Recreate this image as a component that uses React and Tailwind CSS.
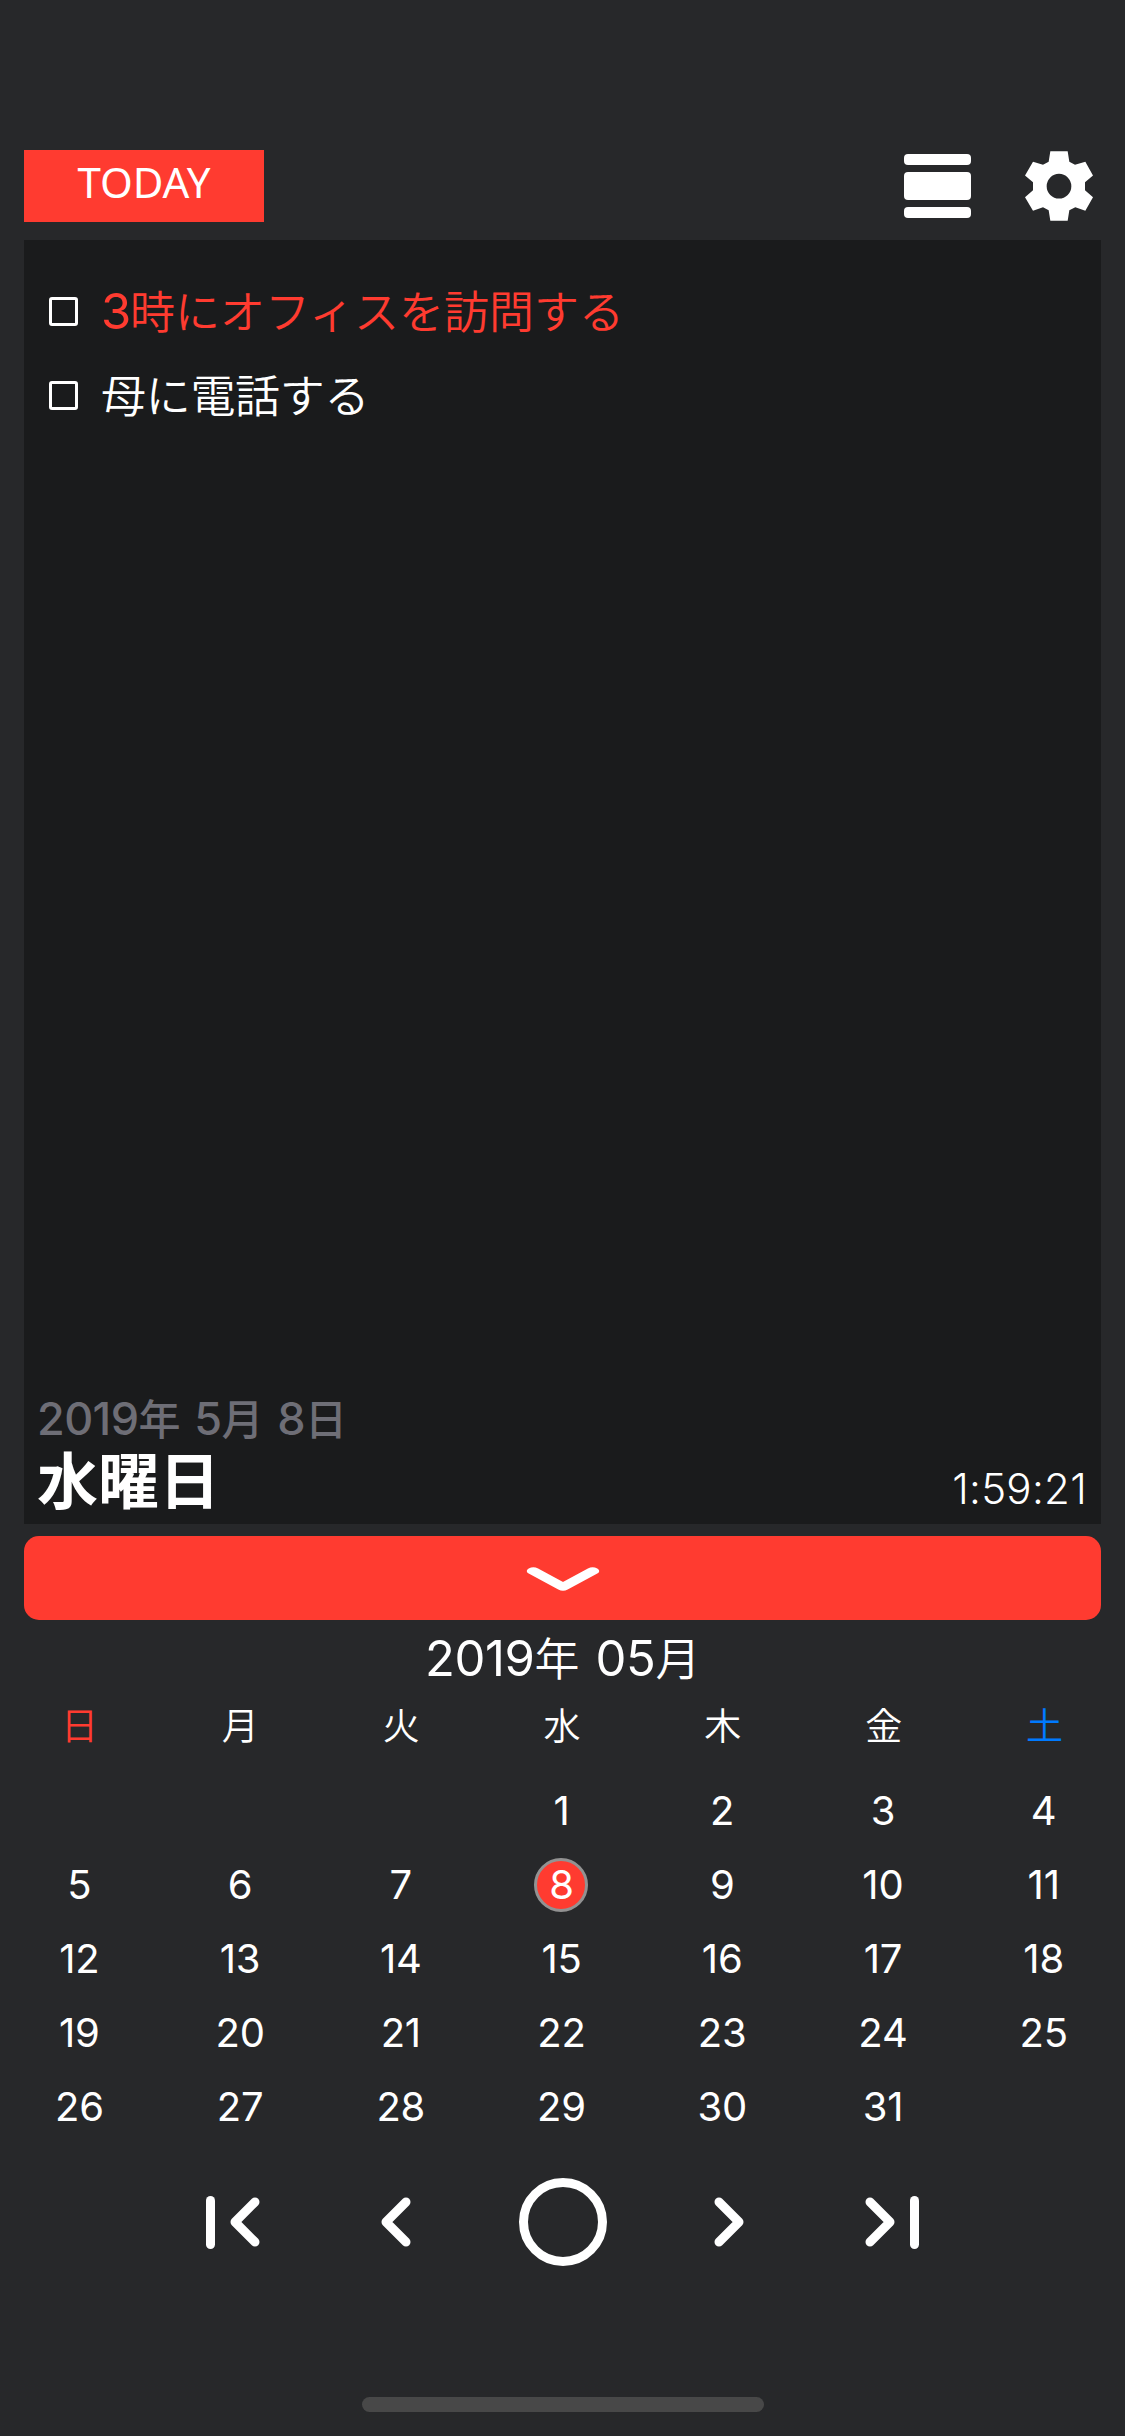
const WEEKDAYS = ["日", "月", "火", "水", "木", "金", "土"];
const WEEKS = [
  [null, null, null, 1, 2, 3, 4],
  [5, 6, 7, 8, 9, 10, 11],
  [12, 13, 14, 15, 16, 17, 18],
  [19, 20, 21, 22, 23, 24, 25],
  [26, 27, 28, 29, 30, 31, null],
];
const SELECTED = 8;

function GearIcon() {
  return (
    <svg className="h-[70px] w-[68px]" viewBox="495 63 204 209" fill="#fff">
      <path
        fillRule="evenodd"
        d="M571 63H623L628 95L645 104L676 95L699 136L675 156V180L699 201L676 242L646 231L628 240L623 272H571L566 240L549 231L519 242L495 201L519 180V156L495 136L519 95L549 104L566 95ZM597 131a37 37 0 1 0 0 74a37 37 0 1 0 0-74Z"
      />
    </svg>
  );
}

function DayViewIcon() {
  return (
    <div className="flex w-[67px] flex-col gap-[7px]">
      <div className="h-[11px] rounded-[4px] bg-white" />
      <div className="h-[28px] rounded-[4px] bg-white" />
      <div className="h-[11px] rounded-[4px] bg-white" />
    </div>
  );
}

function Chevron({ className }) {
  return (
    <svg className={className} viewBox="0 0 30 50" fill="none" stroke="#fff" strokeWidth="9" strokeLinecap="round" strokeLinejoin="round">
      <path d="M25 5L5 25L25 45" />
    </svg>
  );
}

function TaskRow({ children, className }) {
  return (
    <li className="flex h-[84px] items-center gap-[23px]">
      <span className="h-[29px] w-[29px] rounded-[3px] border-[3px] border-white" />
      <span className={className}>{children}</span>
    </li>
  );
}

export default function App() {
  return (
    <main className="flex h-[2436px] w-[1125px] flex-col bg-[#27282a] font-['Inter','Noto_Sans_CJK_JP',sans-serif] text-white">
      <header className="mt-[150px] flex h-[72px] items-center justify-between pr-[32px] pl-[24px]">
        <button className="h-[72px] w-[240px] bg-[#ff3b30] pb-[8px] font-['Noto_Sans',sans-serif] text-[42px] leading-[64px]">TODAY</button>
        <div className="flex items-center gap-[54px]">
          <DayViewIcon />
          <GearIcon />
        </div>
      </header>

      <section className="mx-[24px] mt-[18px] flex h-[1284px] flex-col justify-between bg-[#1a1b1c]">
        <ul className="pt-[29px] pl-[25px] font-['Noto_Sans_CJK_JP',sans-serif] text-[45px] leading-[84px] font-[350] tracking-[-0.3px]">
          <TaskRow className="tracking-[0px] text-[#ff3b30]">
            <span className="inline-block w-[29px] font-['Inter',sans-serif] text-[49px] font-normal tracking-[-2px]">3</span>時にオフィスを訪問する
          </TaskRow>
          <TaskRow className="pb-[2px]">母に電話する</TaskRow>
        </ul>
        <div className="flex items-end justify-between pr-[14px] pb-[8px] pl-[13px]">
          <div>
            <p className="pb-[3px] text-[45px] leading-[50px] font-medium tracking-[-0.6px] text-[#6e6e76] [word-spacing:3px]">
              2019<span className="text-[42px]">年</span> 5<span className="text-[42px]">月</span> 8<span className="text-[42px]">日</span>
            </p>
            <p className="text-[61px] leading-[68px] font-bold">水曜日</p>
          </div>
          <time className="pb-[2px] text-[42px] leading-[50px] font-light tracking-[0.3px]">1:59:21</time>
        </div>
      </section>

      <button className="mx-[24px] mt-[12px] flex h-[84px] items-center justify-center rounded-[15px] bg-[#ff3b30]">
        <svg className="mt-[2px] h-[24px] w-[74px]" viewBox="0 0 50 30" preserveAspectRatio="none" fill="none" stroke="#fff" strokeWidth="9" strokeLinecap="round" strokeLinejoin="round">
          <path d="M5 5L25 25L45 5" />
        </svg>
      </button>

      <h1 className="h-[77px] text-center text-[49px] leading-[78px] font-normal tracking-[-0.4px] [word-spacing:3px]">
        2019<span className="text-[45px] font-[350]">年</span> 05<span className="text-[45px] font-[350]">月</span>
      </h1>

      <div className="-ml-[1px] grid h-[77px] w-[1126px] grid-cols-7 text-center text-[37px] leading-[60px] font-[350]">
        {WEEKDAYS.map((name, i) => (
          <span key={name} className={i === 0 ? "text-[#ff3b30]" : i === 6 ? "text-[#007aff]" : "text-white"}>
            {name}
          </span>
        ))}
      </div>

      <div className="-ml-[1px] grid h-[370px] w-[1125px] grid-cols-7 grid-rows-5 place-items-center text-[40px] leading-[54px] font-normal tracking-[-0.2px]">
        {WEEKS.flat().map((day, i) => (
          <span
            key={i}
            className={day === SELECTED ? "flex h-[54px] w-[54px] items-center justify-center rounded-full border-[3px] border-[#929292] bg-[#ff3b30]" : ""}
          >
            {day}
          </span>
        ))}
      </div>

      <nav className="mt-[34px] flex h-[88px] items-center justify-between px-[206px]">
        <div className="flex items-center gap-[15px]">
          <span className="h-[53px] w-[9px] rounded-full bg-white" />
          <Chevron className="h-[50px] w-[30px]" />
        </div>
        <Chevron className="ml-[14px] h-[50px] w-[30px]" />
        <span className="h-[88px] w-[88px] rounded-full border-[9px] border-white" />
        <Chevron className="mr-[14px] h-[50px] w-[30px] rotate-180" />
        <div className="flex items-center gap-[15px]">
          <Chevron className="h-[50px] w-[30px] rotate-180" />
          <span className="h-[53px] w-[9px] rounded-full bg-white" />
        </div>
      </nav>

      <div className="mx-auto mt-auto mb-[24px] h-[15px] w-[402px] rounded-full bg-[#484848]" />
    </main>
  );
}
